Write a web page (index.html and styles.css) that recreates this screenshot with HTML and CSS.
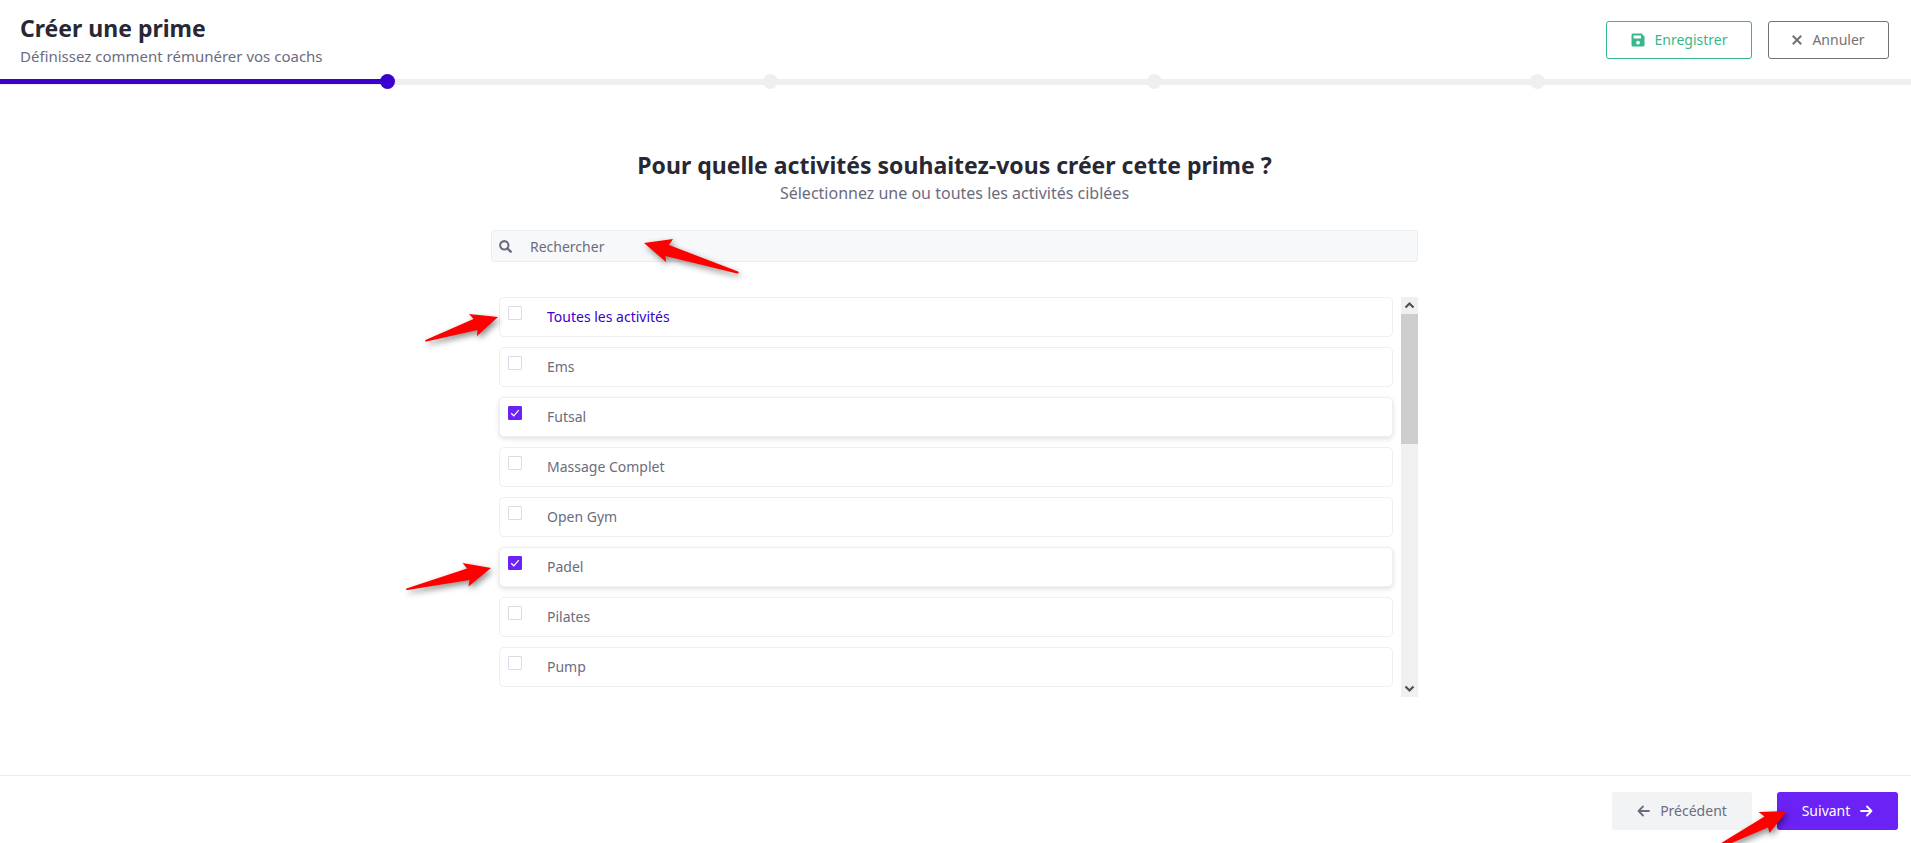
FILE: index.html
```html
<!DOCTYPE html>
<html lang="fr">
<head>
    <meta charset="UTF-8">
    <meta name="viewport" content="width=device-width, initial-scale=1.0">
    <title>Créer une prime</title>
    <link rel="stylesheet" href="styles.css">
</head>
<body>
    <header class="header">
        <div class="header-text">
            <h1>Créer une prime</h1>
            <p class="subtitle">Définissez comment rémunérer vos coachs</p>
        </div>
        <div class="header-actions">
            <button type="button" class="btn btn-save">
                <svg class="icon" width="14" height="14" viewBox="0 0 14 14" aria-hidden="true">
                    <path fill="currentColor" fill-rule="evenodd" d="M2 .5h8.500l3 3V12a1.500 1.500 0 0 1-1.500 1.500H2A1.500 1.500 0 0 1 .5 12V2A1.500 1.500 0 0 1 2 .5zM2.500 2.500v3h7.500v-3zM7 7.800a1.900 1.900 0 1 0 0 3.800 1.900 1.900 0 0 0 0-3.800z"/>
                </svg>
                <span>Enregistrer</span>
            </button>
            <button type="button" class="btn btn-cancel">
                <svg class="icon" width="10" height="10" viewBox="0 0 10 10" aria-hidden="true">
                    <path d="M.8.8l8.400 8.400M9.200.8L.8 9.200" fill="none" stroke="currentColor" stroke-width="2"/>
                </svg>
                <span>Annuler</span>
            </button>
        </div>
    </header>

    <div class="progress">
        <ol class="steps">
            <li class="step active"></li>
            <li class="step"></li>
            <li class="step"></li>
            <li class="step"></li>
            <li class="step last"></li>
        </ol>
    </div>

    <main class="container">
        <h2>Pour quelle activités souhaitez-vous créer cette prime ?</h2>
        <p class="subtitle">Sélectionnez une ou toutes les activités ciblées</p>

        <div class="search">
            <svg class="search-icon" width="13" height="13" viewBox="0 0 14 14" aria-hidden="true">
                <circle cx="5.700" cy="5.700" r="4.500" fill="none" stroke="currentColor" stroke-width="2.200"/>
                <path d="M9.200 9.200l3.400 3.400" stroke="currentColor" stroke-width="2.600" stroke-linecap="round"/>
            </svg>
            <input type="text" placeholder="Rechercher" aria-label="Rechercher">
            <svg class="arrow arrow-search" width="110" height="50" viewBox="0 0 110 50" aria-hidden="true">
                <path d="M4 8L33 4L29 10L98 36.500Q100 38.500 97 38.500L25.500 21L26 27z"/>
            </svg>
        </div>

        <div class="list">
            <div class="items">
                <div class="item all">
                    <input type="checkbox" id="a-all">
                    <label for="a-all">Toutes les activités</label>
                    <svg class="arrow arrow-all" width="90" height="50" viewBox="0 0 90 50" aria-hidden="true">
                        <path d="M77 13L48 10L52.500 15L4.500 36Q3 38 5.500 37.500L56.500 26L56 32z"/>
                    </svg>
                </div>
                <div class="item">
                    <input type="checkbox" id="a-ems">
                    <label for="a-ems">Ems</label>
                </div>
                <div class="item">
                    <input type="checkbox" id="a-futsal" checked>
                    <label for="a-futsal">Futsal</label>
                </div>
                <div class="item">
                    <input type="checkbox" id="a-massage">
                    <label for="a-massage">Massage Complet</label>
                </div>
                <div class="item">
                    <input type="checkbox" id="a-gym">
                    <label for="a-gym">Open Gym</label>
                </div>
                <div class="item">
                    <input type="checkbox" id="a-padel" checked>
                    <label for="a-padel">Padel</label>
                    <svg class="arrow arrow-padel" width="100" height="50" viewBox="0 0 100 50" aria-hidden="true">
                        <path d="M89 13L60.500 8L65 13.500L4.500 33.500Q3 35.500 5.500 35L67.500 25L66.500 31.500z"/>
                    </svg>
                </div>
                <div class="item">
                    <input type="checkbox" id="a-pilates">
                    <label for="a-pilates">Pilates</label>
                </div>
                <div class="item">
                    <input type="checkbox" id="a-pump">
                    <label for="a-pump">Pump</label>
                </div>
            </div>
            <div class="scrollbar" aria-hidden="true">
                <svg width="17" height="17" viewBox="0 0 17 17">
                    <path d="M4.500 10.500l4-4 4 4" fill="none" stroke="#505050" stroke-width="2.200"/>
                </svg>
                <div class="thumb"></div>
                <svg class="down" width="17" height="17" viewBox="0 0 17 17">
                    <path d="M4.500 6.500l4 4 4-4" fill="none" stroke="#505050" stroke-width="2.200"/>
                </svg>
            </div>
        </div>
    </main>

    <footer class="footer">
        <button type="button" class="btn btn-prev">
            <svg class="icon" width="13" height="12" viewBox="0 0 13 12" aria-hidden="true">
                <path d="M12 6H1.500M6 1.500L1.500 6 6 10.500" fill="none" stroke="currentColor" stroke-width="1.800" stroke-linecap="round" stroke-linejoin="round"/>
            </svg>
            <span>Précédent</span>
        </button>
        <button type="button" class="btn btn-next">
            <span>Suivant</span>
            <svg class="icon" width="13" height="12" viewBox="0 0 13 12" aria-hidden="true">
                <path d="M1 6h10.500M7 1.500L11.500 6 7 10.500" fill="none" stroke="currentColor" stroke-width="1.800" stroke-linecap="round" stroke-linejoin="round"/>
            </svg>
            <svg class="arrow arrow-next" width="80" height="40" viewBox="0 0 80 40" aria-hidden="true">
                <path d="M90 8L61.500 9L67.500 13.500L21 42L30 42L71 24.500L72.500 30z" transform="translate(-20 0)"/>
            </svg>
        </button>
    </footer>
</body>
</html>
```
FILE: styles.css
```css
* {
    box-sizing: border-box;
}
body {
    font-family: "Noto Sans", "Open Sans", sans-serif;
    font-size: 14px;
    margin: 0;
    min-height: 100vh;
    display: flex;
    flex-direction: column;
    background-color: #fff;
    color: #6b6c7e;
}
h1, h2 {
    margin: 0;
    font-size: 23px;
    line-height: 32px;
    font-weight: 700;
    color: #272833;
}
.subtitle {
    margin: 0;
    font-size: 16px;
    line-height: 24px;
}

/* header */
.header {
    display: flex;
    justify-content: space-between;
    align-items: center;
    padding: 12px 22px 6px 20px;
    height: 74px;
}
.header .subtitle {
    font-size: 15px;
}
.header-actions {
    display: flex;
    gap: 16px;
}
.btn {
    display: flex;
    align-items: center;
    justify-content: center;
    gap: 10px;
    height: 38px;
    padding: 0 24px;
    border: 1px solid transparent;
    border-radius: 3px;
    font-family: inherit;
    font-size: 14px;
    line-height: 20px;
    cursor: pointer;
}
.btn-save {
    width: 146px;
    background-color: #fff;
    border-color: #37b88b;
    color: #37b88b;
}
.btn-cancel {
    width: 121px;
    background-color: #fff;
    border-color: #727272;
    color: #727272;
}
.icon {
    flex: none;
}

/* step bar */
.progress {
    overflow: hidden;
}
.steps {
    list-style: none;
    display: flex;
    margin: 0 -10px 0 0;
    padding: 0 0 0 3px;
    background: linear-gradient(#efefef, #efefef) 0 5px / 100% 6px no-repeat;
}
.step {
    flex: 1;
    height: 15px;
    display: flex;
    justify-content: flex-end;
}
.step::after {
    content: "";
    width: 15px;
    height: 15px;
    margin-right: -8px;
    border-radius: 50%;
    background-color: #efefef;
}
.step.active {
    margin-left: -3px;
    padding-left: 3px;
    background: linear-gradient(#3c00cd, #3c00cd) 0 5px / 100% 5px no-repeat;
}
.step.active::after {
    background-color: #3c00cd;
}
.step.last::after {
    display: none;
}

/* content */
.container {
    flex: 1;
    width: 100%;
    max-width: 929px;
    margin: 0 auto;
    padding: 60px 2px 20px 0;
}
.container h2,
.container .subtitle {
    text-align: center;
}
.search {
    position: relative;
    display: flex;
    align-items: center;
    height: 32px;
    margin-top: 25px;
    padding-left: 7px;
    border: 1px solid #ebedf0;
    border-radius: 3px;
    background-color: #f7f8fa;
}
.search input {
    flex: 1;
    height: 30px;
    margin-left: 10px;
    padding: 0 8px;
    border: none;
    outline: none;
    background: transparent;
    font-family: inherit;
    font-size: 14px;
    color: #6b6c7e;
}
.search input::placeholder {
    color: #6b6c7e;
    opacity: 1;
}
.list {
    display: flex;
    gap: 8px;
    margin-top: 35px;
    height: 400px;
}
.items {
    flex: 1;
    display: flex;
    flex-direction: column;
    gap: 10px;
    padding-left: 8px;
}
.item {
    position: relative;
    display: flex;
    height: 40px;
    padding: 8px;
    border: 1px solid #efefef;
    border-radius: 5px;
    background-color: #fff;
}
.item:has(input:checked) {
    box-shadow: 0 2px 5px rgba(0, 0, 0, 0.12);
}
.item label {
    margin-left: 25px;
    line-height: 22px;
}
.item.all label {
    color: #3c00cd;
}
.item input {
    appearance: none;
    width: 14px;
    height: 14px;
    margin: 0;
    border: 1px solid #d9dbe6;
    border-radius: 1px;
    background-color: #fff;
}
.item input:checked {
    border-color: #6a22f5;
    background: #6a22f5 url("data:image/svg+xml,%3Csvg xmlns='http://www.w3.org/2000/svg' viewBox='0 0 12 12'%3E%3Cpath d='M2.200 6.300l2.600 2.500 5-5.600' fill='none' stroke='white' stroke-width='1.200'/%3E%3C/svg%3E") center / 12px 12px no-repeat;
}
.scrollbar {
    display: flex;
    flex-direction: column;
    width: 17px;
    background-color: #f0f0f0;
}
.thumb {
    height: 130px;
    background-color: #cdcdcd;
}
.scrollbar .down {
    margin-top: auto;
}

/* footer */
.footer {
    display: flex;
    justify-content: flex-end;
    gap: 25px;
    height: 68px;
    padding: 16px 13px 0;
    border-top: 1px solid #ebedef;
}
.btn-prev {
    width: 140px;
    background-color: #f1f3f5;
    color: #6b6c7e;
}
.btn-next {
    position: relative;
    width: 121px;
    background-color: #6a22f5;
    color: #fff;
}

/* red pointers over the page */
.arrow {
    position: absolute;
    pointer-events: none;
    fill: #f00;
    filter: drop-shadow(2px 3px 3px rgba(0, 0, 0, 0.45));
}
.arrow-search {
    left: 148px;
    top: 4px;
}
.arrow-all {
    left: -79px;
    top: 6px;
}
.arrow-padel {
    left: -98px;
    top: 7px;
}
.arrow-next {
    left: -61px;
    top: 10px;
}
```
